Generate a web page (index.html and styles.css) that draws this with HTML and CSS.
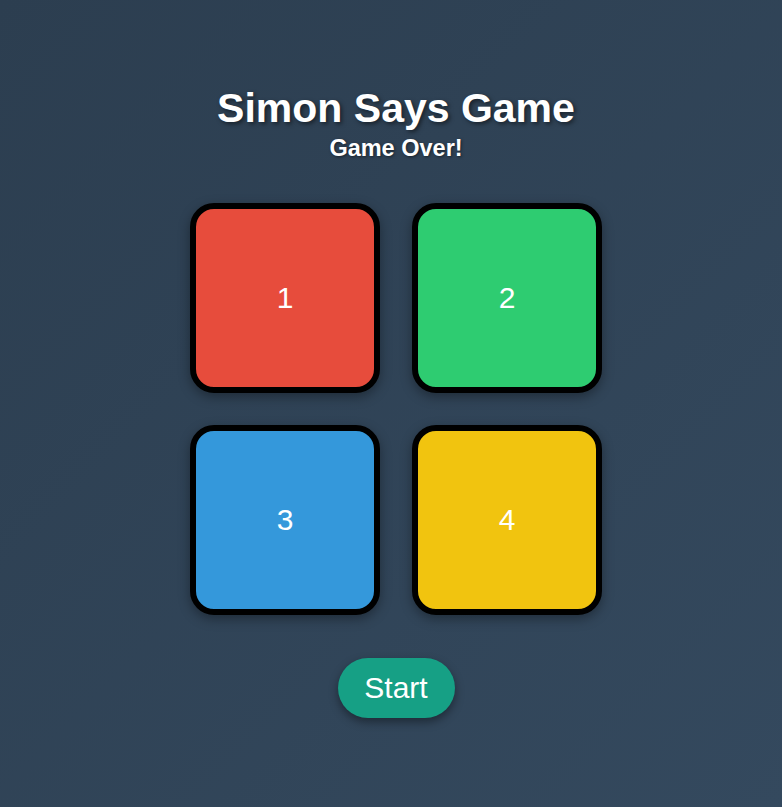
FILE: index.html
```html
<!DOCTYPE html>
<html>
<head>
<meta charset="utf-8">
<link rel="stylesheet" href="styles.css">
</head>
<body>
<div class="app">
  <h1 class="title">Simon Says Game</h1>
  <div class="status">Game Over!</div>
  <div class="board">
    <div class="tile red">1</div>
    <div class="tile green">2</div>
    <div class="tile blue">3</div>
    <div class="tile yellow">4</div>
  </div>
  <button class="start">Start</button>
</div>
</body>
</html>
```
FILE: styles.css
```css
html, body {
  margin: 0;
  height: 100%;
}
body {
  background: linear-gradient(135deg, #2c3e50, #34495e);
  font-family: "Liberation Sans", Arial, sans-serif;
  color: #fff;
}
.app {
  display: flex;
  flex-direction: column;
  align-items: center;
  padding: 88px 0 0 10px;
}
.title {
  margin: 0;
  font-size: 41px;
  line-height: 40px;
  font-weight: bold;
  text-shadow: 2px 2px 4px rgba(0,0,0,0.5);
}
.status {
  margin-top: 7px;
  font-size: 23.5px;
  font-weight: bold;
  line-height: 26px;
  text-shadow: 1px 1px 3px rgba(0,0,0,0.5);
}
.board {
  margin-top: 42px;
  display: grid;
  grid-template-columns: 190px 190px;
  gap: 32px;
}
.tile {
  box-sizing: border-box;
  width: 190px;
  height: 190px;
  border: 6px solid #000;
  border-radius: 24px;
  display: flex;
  align-items: center;
  justify-content: center;
  font-size: 30px;
  color: #fff;
  box-shadow: 0 4px 12px rgba(0,0,0,0.35);
}
.red { background: #e74c3c; }
.green { background: #2ecc71; }
.blue { background: #3498db; }
.yellow { background: #f1c40f; }
.start {
  margin-top: 43px;
  width: 117px;
  height: 60px;
  border: none;
  border-radius: 30px;
  background: #16a085;
  color: #fff;
  font-family: "Liberation Sans", Arial, sans-serif;
  font-size: 30px;
  box-shadow: 0 4px 10px rgba(0,0,0,0.4);
  padding: 0;
}
```
